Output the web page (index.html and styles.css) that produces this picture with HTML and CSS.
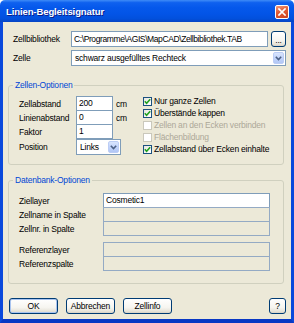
FILE: index.html
```html
<!DOCTYPE html>
<html>
<head>
<meta charset="utf-8">
<link rel="stylesheet" href="styles.css">
</head>
<body>
<div class="window">
  <div class="titlebar">
    <span class="title">Linien-Begleitsignatur</span>
    <span class="close"><svg width="8" height="8" viewBox="0 0 8 8"><path d="M1 1L7 7M7 1L1 7" stroke="#fff" stroke-width="1.7" stroke-linecap="square"/></svg></span>
  </div>
  <div class="client">
    <div class="row">
      <span class="lbl lbl-top">Zellbibliothek</span>
      <div class="edit path">C:\Programme\AGIS\MapCAD\Zellbibliothek.TAB</div>
      <div class="btn dots">...</div>
    </div>
    <div class="row row2">
      <span class="lbl lbl-top">Zelle</span>
      <div class="combo wide"><span class="ctext">schwarz ausgefülltes Rechteck</span><span class="drop"><svg width="7" height="5" viewBox="0 0 7 5"><path d="M0.8 0.8L3.5 3.5L6.2 0.8" fill="none" stroke="#4d6185" stroke-width="1.6"/></svg></span></div>
    </div>

    <fieldset class="group g1">
      <legend>Zellen-Optionen</legend>
      <div class="g1-body">
        <div class="fields">
          <div class="frow"><span class="lbl lbl1">Zellabstand</span><div class="edit small">200</div><span class="unit">cm</span></div>
          <div class="frow"><span class="lbl lbl1">Linienabstand</span><div class="edit small">0</div><span class="unit">cm</span></div>
          <div class="frow"><span class="lbl lbl1">Faktor</span><div class="edit small">1</div></div>
          <div class="frow frow-sel"><span class="lbl lbl1">Position</span><div class="combo pos"><span class="ctext">Links</span><span class="drop"><svg width="7" height="5" viewBox="0 0 7 5"><path d="M0.8 0.8L3.5 3.5L6.2 0.8" fill="none" stroke="#4d6185" stroke-width="1.6"/></svg></span></div></div>
        </div>
        <div class="checks">
          <div class="chk"><span class="box on"><svg width="7" height="7" viewBox="0 0 7 7"><path d="M0.8 3.2L2.6 5.2L6.2 1.2" fill="none" stroke="#21a121" stroke-width="1.6"/></svg></span>Nur ganze Zellen</div>
          <div class="chk"><span class="box on"><svg width="7" height="7" viewBox="0 0 7 7"><path d="M0.8 3.2L2.6 5.2L6.2 1.2" fill="none" stroke="#21a121" stroke-width="1.6"/></svg></span>Überstände kappen</div>
          <div class="chk dis"><span class="box"></span>Zellen an den Ecken verbinden</div>
          <div class="chk dis"><span class="box"></span>Flächenbildung</div>
          <div class="chk"><span class="box on"><svg width="7" height="7" viewBox="0 0 7 7"><path d="M0.8 3.2L2.6 5.2L6.2 1.2" fill="none" stroke="#21a121" stroke-width="1.6"/></svg></span>Zellabstand über Ecken einhalte</div>
        </div>
      </div>
    </fieldset>

    <fieldset class="group g2">
      <legend>Datenbank-Optionen</legend>
      <div class="drow"><span class="lbl lbl2">Ziellayer</span><div class="edit long">Cosmetic1</div></div>
      <div class="drow"><span class="lbl lbl2">Zellname in Spalte</span><div class="edit long off"></div></div>
      <div class="drow"><span class="lbl lbl2">Zellnr. in Spalte</span><div class="edit long off"></div></div>
      <div class="drow gap"><span class="lbl lbl2">Referenzlayer</span><div class="edit long off"></div></div>
      <div class="drow"><span class="lbl lbl2">Referenzspalte</span><div class="edit long off"></div></div>
    </fieldset>

    <div class="buttons">
      <div class="btn push default">OK</div>
      <div class="btn push">Abbrechen</div>
      <div class="btn push">Zellinfo</div>
      <div class="btn help">?</div>
    </div>
  </div>
</div>
</body>
</html>
```

FILE: styles.css
```css
* { box-sizing: border-box; }
html, body { margin: 0; padding: 0; background: #ffffff; }
body {
  font-family: "Liberation Sans", Arial, sans-serif;
  font-size: 8.5px;
  letter-spacing: -0.2px;
  color: #000;
}
.window {
  width: 294px;
  height: 323px;
  display: flex;
  flex-direction: column;
}
.titlebar {
  height: 22px;
  flex: none;
  display: flex;
  align-items: center;
  padding: 1px 5px 0 6px;
  border-radius: 5px 5px 0 0;
  background: linear-gradient(180deg, #3f8cf7 0%, #0f61ef 12%, #0558eb 35%, #0354e6 65%, #0250dc 85%, #0644c4 100%);
}
.title {
  flex: 1;
  color: #fff;
  font-weight: bold;
  font-size: 9.5px;
  letter-spacing: -0.1px;
  text-shadow: 1px 1px 0 #0a1e8a;
}
.close {
  width: 14px;
  height: 14px;
  border: 1px solid #fff;
  border-radius: 2px;
  background: linear-gradient(160deg, #f09a7c 0%, #e25a33 45%, #cc4320 100%);
  display: flex;
  align-items: center;
  justify-content: center;
}
.client {
  flex: 1;
  background: #ece9d8;
  border-left: 3px solid #0a49dc;
  border-right: 3px solid #0a49dc;
  border-bottom: 4px solid #0838c4;
  padding: 9px 0 5px 5px;
  display: flex;
  flex-direction: column;
}
.row {
  display: flex;
  align-items: center;
  padding: 0 5px;
  height: 16px;
}
.row2 { margin-top: 3px; }
.lbl { white-space: nowrap; }
.lbl-top { width: 58px; flex: none; }
.edit {
  background: #fff;
  border: 1px solid #7f9db9;
  height: 15px;
  line-height: 13px;
  padding-left: 2px;
  white-space: nowrap;
  overflow: hidden;
}
.path { flex: 1; height: 16px; line-height: 14px; letter-spacing: -0.4px; }
.btn {
  border: 1px solid #003c74;
  border-radius: 3px;
  background: linear-gradient(180deg, #ffffff 0%, #f6f5f0 60%, #e6e3d8 88%, #d6d0c5 100%);
  display: flex;
  align-items: center;
  justify-content: center;
  white-space: nowrap;
}
.dots {
  width: 15px;
  height: 16px;
  margin-left: 3px;
  align-items: flex-end;
  padding-bottom: 3px;
  line-height: 6px;
}
.combo {
  background: #fff;
  border: 1px solid #7f9db9;
  height: 16px;
  display: flex;
  align-items: center;
  padding: 1px;
}
.wide { flex: 1; }
.ctext { flex: 1; padding-left: 2px; white-space: nowrap; overflow: hidden; }
.drop {
  width: 11px;
  height: 12px;
  border-radius: 2px;
  border: 1px solid #bccdf5;
  background: linear-gradient(180deg, #d9e5fd 0%, #c2d4fb 50%, #b2c7f5 100%);
  display: flex;
  align-items: center;
  justify-content: center;
}
.group {
  margin: 14px 7px 0 0;
  border: 1px solid #d0d0bf;
  border-radius: 3px;
  min-width: 0;
}
.group legend {
  color: #0046d5;
  line-height: 10px;
  padding: 0 2px;
  margin-left: -6px;
}
.g1 { padding: 6px 0 9px 10px; }
.g1-body { display: flex; }
.fields { width: 124px; flex: none; }
.frow { display: flex; align-items: center; height: 15px; }
.frow + .frow { margin-top: -1px; }
.frow.frow-sel { margin-top: 0; height: 16px; }
.lbl1 { width: 57px; flex: none; }
.small { width: 37px; flex: none; }
.unit { margin-left: 3px; }
.pos { width: 45px; flex: none; }
.checks { flex: 1; margin-top: -1px; }
.chk {
  display: flex;
  align-items: center;
  height: 12px;
  white-space: nowrap;
}
.chk.dis { color: #aca899; }
.box {
  width: 9px;
  height: 9px;
  flex: none;
  margin-right: 2px;
  border: 1px solid #cac8bb;
  background: #fff;
  display: flex;
  align-items: center;
  justify-content: center;
}
.box.on {
  border-color: #1c5180;
  background: linear-gradient(135deg, #e4e4dd 0%, #f8f8f6 60%, #ffffff 100%);
}
.g2 { padding: 8px 0 12px 10px; margin-top: 10px; }
.drow { display: flex; align-items: center; height: 15px; }
.drow + .drow { margin-top: -1px; }
.drow.gap { margin-top: 6px; }
.lbl2 { width: 84px; flex: none; }
.long { width: 167px; flex: none; }
.edit.off { background: #ece9d8; border-color: #94aac4; }
.buttons {
  display: flex;
  gap: 8px;
  margin-top: 14px;
  padding: 0 5px 0 1px;
  height: 16px;
}
.push { width: 49px; height: 16px; }
.default { box-shadow: inset 0 0 0 1px #a9c4f0; }
.help { width: 17px; height: 16px; margin-left: auto; }
```
